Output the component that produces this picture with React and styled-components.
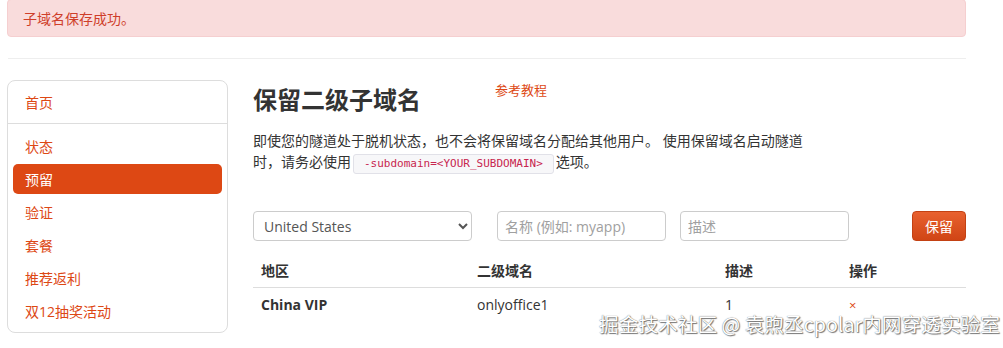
import React from 'react';
import styled, { createGlobalStyle } from 'styled-components';

const GlobalStyle = createGlobalStyle`
  body {
    margin: 0;
    background: #fff;
    font-family: "Open Sans", "Noto Sans CJK SC", sans-serif;
    color: #333;
  }
`;

const navItems = ['状态', '预留', '验证', '套餐', '推荐返利', '双12抽奖活动'];

const App = () => {
  return (
    <Screen>
      <GlobalStyle />
      <Page>
        <Alert>子域名保存成功。</Alert>
        <Rule />
        <Layout>
          <Sidebar>
            <HomeItem>首页</HomeItem>
            <NavList>
              {navItems.map((item) => (
                <NavItem key={item} $active={item === '预留'}>
                  {item}
                </NavItem>
              ))}
            </NavList>
          </Sidebar>
          <Main>
            <TitleRow>
              <Title>保留二级子域名</Title>
              <DocLink>参考教程</DocLink>
            </TitleRow>
            <Lead>
              即使您的隧道处于脱机状态，也不会将保留域名分配给其他用户。 使用保留域名启动隧道时，请务必使用
              <Code>-subdomain=&lt;YOUR_SUBDOMAIN&gt;</Code>选项。
            </Lead>
            <FormRow>
              <Select defaultValue="us">
                <option value="us">United States</option>
                <option value="cn">China VIP</option>
              </Select>
              <Input $gap={25} placeholder="名称 (例如: myapp)" />
              <Input $gap={14} placeholder="描述" />
              <Button>保留</Button>
            </FormRow>
            <Table>
              <thead>
                <tr>
                  <Th $w={216}>地区</Th>
                  <Th $w={248}>二级域名</Th>
                  <Th $w={124}>描述</Th>
                  <Th>操作</Th>
                </tr>
              </thead>
              <tbody>
                <tr>
                  <Td $bold>China VIP</Td>
                  <Td>onlyoffice1</Td>
                  <Td>1</Td>
                  <Td>
                    <Remove>×</Remove>
                  </Td>
                </tr>
              </tbody>
            </Table>
          </Main>
        </Layout>
      </Page>
      <Watermark>掘金技术社区 @ 袁煦丞cpolar内网穿透实验室</Watermark>
    </Screen>
  );
};

export default App;

const Screen = styled.div`
  position: relative;
  width: 1003px;
  height: 348px;
  overflow: hidden;
`;

const Page = styled.div`
  width: 959px;
  margin-left: 7px;
`;

const Alert = styled.div`
  height: 38px;
  margin-top: -1px;
  box-sizing: border-box;
  padding: 0 15px;
  display: flex;
  align-items: center;
  background: #f9dcdc;
  border: 1px solid #f5cfd0;
  border-radius: 4px;
  color: #cf3e2a;
  font-size: 14px;
`;

const Rule = styled.div`
  height: 1px;
  background: #eeeeee;
  margin-top: 21px;
  margin-left: 1px;
`;

const Layout = styled.div`
  display: flex;
  gap: 25px;
  margin-top: 21px;
`;

const Sidebar = styled.nav`
  width: 221px;
  height: 253px;
  box-sizing: border-box;
  border: 1px solid #dddddd;
  border-radius: 8px;
`;

const HomeItem = styled.div`
  height: 43px;
  box-sizing: border-box;
  display: flex;
  align-items: center;
  padding-left: 17px;
  border-bottom: 1px solid #dddddd;
  color: #dd4814;
  font-size: 14px;
`;

const NavList = styled.div`
  display: flex;
  flex-direction: column;
  gap: 3px;
  padding: 7px 5px 0;
`;

const NavItem = styled.div`
  height: 30px;
  display: flex;
  align-items: center;
  padding-left: 12px;
  border-radius: 5px;
  font-size: 14px;
  color: ${(p) => (p.$active ? '#fff' : '#dd4814')};
  background: ${(p) => (p.$active ? '#dd4814' : 'transparent')};
`;

const Main = styled.div`
  width: 713px;
`;

const TitleRow = styled.div`
  display: flex;
  align-items: flex-start;
`;

const Title = styled.h1`
  margin: 6px 0 0;
  font-size: 24px;
  line-height: 28px;
  font-weight: 700;
  color: #333;
`;

const DocLink = styled.a`
  margin-left: 74px;
  margin-top: 1px;
  font-size: 13px;
  line-height: 18px;
  color: #dd4814;
`;

const Lead = styled.p`
  max-width: 556px;
  margin: 16px 0 0;
  font-size: 14px;
  line-height: 21px;
  color: #333;
`;

const Code = styled.code`
  display: inline-block;
  margin: 0 2px;
  padding: 0 10px;
  line-height: 18px;
  font-family: "DejaVu Sans Mono", "Liberation Mono", monospace;
  font-size: 11px;
  color: #c7254e;
  background: #f7f7f9;
  border: 1px solid #e1e1e8;
  border-radius: 3px;
`;

const FormRow = styled.div`
  display: flex;
  align-items: center;
  margin-top: 37px;
`;

const Select = styled.select`
  width: 219px;
  height: 30px;
  padding: 0 6px;
  font-family: "Open Sans", sans-serif;
  font-size: 14px;
  color: #555;
  background: #fff;
  border: 1px solid #cccccc;
  border-radius: 4px;
`;

const Input = styled.input`
  width: 169px;
  height: 30px;
  box-sizing: border-box;
  margin-left: ${(p) => p.$gap}px;
  padding: 0 7px;
  font-family: "Open Sans", "Noto Sans CJK SC", sans-serif;
  font-size: 14px;
  color: #555;
  border: 1px solid #cccccc;
  border-radius: 4px;
  &::placeholder {
    color: #a0a0a0;
  }
`;

const Button = styled.button`
  margin-left: auto;
  width: 54px;
  height: 30px;
  font-family: "Noto Sans CJK SC", sans-serif;
  font-size: 14px;
  color: #fff;
  background: linear-gradient(#e8612f, #d04515);
  border: 1px solid #c34113;
  border-radius: 4px;
`;

const Table = styled.table`
  width: 100%;
  margin-top: 12px;
  border-collapse: collapse;
  table-layout: fixed;
  font-size: 14px;
`;

const Th = styled.th`
  box-sizing: border-box;
  width: ${(p) => (p.$w ? `${p.$w}px` : 'auto')};
  height: 34px;
  padding: 0 8px;
  text-align: left;
  font-weight: 700;
  color: #333;
  border-bottom: 1px solid #dddddd;
`;

const Td = styled.td`
  height: 34px;
  padding: 0 8px;
  font-weight: ${(p) => (p.$bold ? 700 : 400)};
  color: #333;
`;

const Remove = styled.span`
  font-size: 13px;
  color: #dd4814;
`;

const Watermark = styled.div`
  position: absolute;
  right: 3px;
  bottom: 12px;
  font-family: "Noto Sans CJK SC", sans-serif;
  font-size: 19.7px;
  line-height: 24px;
  color: #fff;
  text-shadow: 0 0 1px #555, 1px 1px 1px #777;
  white-space: nowrap;
`;
